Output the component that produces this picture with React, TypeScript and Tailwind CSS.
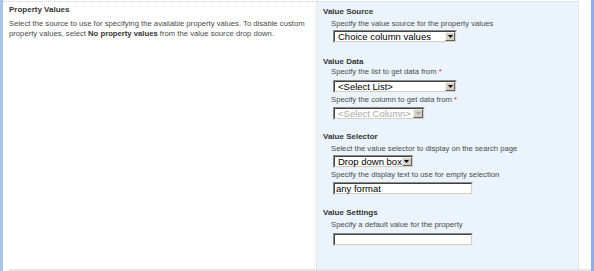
import React from 'react'

const font = { fontFamily: '"Liberation Sans", Arial, sans-serif' }

function DropBox({ label, width, disabled }: { label: string; width: string; disabled?: boolean }) {
    return (
        <div
            className={`flex h-[13px] items-stretch border border-t-[#8a8a8a] border-l-[#8a8a8a] border-b-[#f0f0f0] border-r-[#f0f0f0] bg-white ${width}`}
        >
            <div className="flex flex-1 items-stretch border border-t-[#404040] border-l-[#404040] border-b-[#d4d0c8] border-r-[#d4d0c8]">
                <span
                    className={`flex flex-1 items-center whitespace-nowrap pl-[3px] text-[9.5px] leading-[9px] ${disabled ? 'text-[#a8a8a8]' : 'text-black'}`}
                >
                    {label}
                </span>
                <span className="flex w-[10px] items-center justify-center border border-t-[#f4f4f4] border-l-[#f4f4f4] border-b-[#606060] border-r-[#606060] bg-[#d4d0c8]">
                    <svg width="5" height="3" viewBox="0 0 5 3">
                        <path d="M0 0H5L2.5 3Z" fill={disabled ? '#a8a8a8' : '#000'} />
                    </svg>
                </span>
            </div>
        </div>
    )
}

function TextBox({ value }: { value?: string }) {
    return (
        <div className="h-[13px] w-[140px] border border-t-[#8a8a8a] border-l-[#8a8a8a] border-b-[#f0f0f0] border-r-[#f0f0f0] bg-white">
            <div className="flex h-full items-center border border-t-[#404040] border-l-[#404040] border-b-[#d4d0c8] border-r-[#d4d0c8] pl-[1px] text-[9.5px] leading-[9px] text-black">
                {value}
            </div>
        </div>
    )
}

function Hint({ text, required, className = '' }: { text: string; required?: boolean; className?: string }) {
    return (
        <div className={`whitespace-nowrap pl-[8px] text-[7.7px] leading-[10px] text-[#4a4a4a] ${className}`}>
            {text}
            {required && <span className="text-[#e02020]"> *</span>}
        </div>
    )
}

function Heading({ text, className = '' }: { text: string; className?: string }) {
    return <div className={`text-[8px] font-bold leading-[10px] text-[#333333] ${className}`}>{text}</div>
}

export default function App() {
    return (
        <div className="flex h-[271px] w-[594px] border-l-[3px] border-r-[3px] border-l-[#a7c4ee] border-r-[#8cb0e6] bg-white" style={font}>
            <div className="flex flex-1 flex-col">
                <div className="mt-[1px] flex flex-1">
                    {/* Description column */}
                    <div className="w-[314px] border-t border-r border-dotted border-[#c9d3e0] pl-[6px] pt-[3px]">
                        <Heading text="Property Values" />
                        <div className="mt-[4px] whitespace-nowrap text-[7.7px] leading-[10px] text-[#4a4a4a]">
                            Select the source to use for specifying the available property values. To disable custom
                            <br />
                            property values, select <b className="text-[#333333]">No property values</b> from the value source drop down.
                        </div>
                    </div>

                    {/* Controls column */}
                    <div className="flex w-[262px] flex-col border-t border-r border-dotted border-[#d3dcea] bg-[#ebf3fd] pl-[6px] pt-[5px]">
                        <Heading text="Value Source" />
                        <Hint text="Specify the value source for the property values" className="mt-[2px]" />
                        <div className="ml-[10px] mt-[1px]">
                            <DropBox label="Choice column values" width="w-[124px]" />
                        </div>

                        <Heading text="Value Data" className="mt-[14px]" />
                        <Hint text="Specify the list to get data from" required />
                        <div className="ml-[10px] mt-[3px]">
                            <DropBox label="<Select List>" width="w-[124px]" />
                        </div>
                        <Hint text="Specify the column to get data from" required className="mt-[2px]" />
                        <div className="ml-[10px] mt-[2px]">
                            <DropBox label="<Select Column>" width="w-[92px]" disabled />
                        </div>

                        <Heading text="Value Selector" className="mt-[12px]" />
                        <Hint text="Select the value selector to display on the search page" className="mt-[2px]" />
                        <div className="ml-[10px] mt-[1px]">
                            <DropBox label="Drop down box" width="w-[80px]" />
                        </div>
                        <Hint text="Specify the display text to use for empty selection" className="mt-[2px]" />
                        <div className="ml-[10px] mt-[2px]">
                            <TextBox value="any format" />
                        </div>

                        <Heading text="Value Settings" className="mt-[13px]" />
                        <Hint text="Specify a default value for the property" className="mt-[2px]" />
                        <div className="ml-[10px] mt-[3px]">
                            <TextBox />
                        </div>
                    </div>
                    <div className="flex-1 bg-white" />
                </div>
                <div className="flex h-[2px]">
                    <div className="w-[6px] bg-white" />
                    <div className="flex-1 bg-[#e4e4e4]" />
                </div>
            </div>
        </div>
    )
}
